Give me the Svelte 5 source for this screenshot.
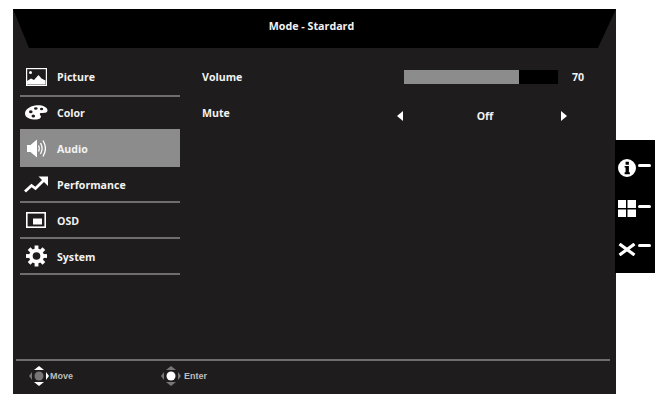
<script>
  const menu = [
    { name: 'Picture', icon: 'picture', cls: 'first' },
    { name: 'Color', icon: 'color', cls: 'plain' },
    { name: 'Audio', icon: 'audio', cls: 'active' },
    { name: 'Performance', icon: 'performance', cls: '' },
    { name: 'OSD', icon: 'osd', cls: '' },
    { name: 'System', icon: 'system', cls: '' }
  ];
  const volume = 74.7;
  const teeth = [0, 45, 90, 135];
</script>

{#snippet dpad(lit)}
  <svg class="dpad" width="20" height="20" viewBox="0 0 20 20">
    <path d="M10 0l5 4H5z" fill={lit === 'move' ? '#fff' : '#777'} />
    <path d="M5 16h10l-5 4z" fill={lit === 'move' ? '#fff' : '#777'} />
    <path d="M0 10l3-4v8z" fill="#777" />
    <path d="M20 10l-3-4v8z" fill={lit === 'move' ? '#fff' : '#777'} />
    <circle cx="10" cy="10" r="4.500" fill={lit === 'move' ? '#777' : '#fff'} />
  </svg>
{/snippet}

<div class="page">
  <div class="osd">
    <div class="header"><span>Mode - Stardard</span></div>

    <div class="main">
      <nav class="menu">
        {#each menu as item}
          <div class="item {item.cls}">
            <span class="icon">
              {#if item.icon === 'picture'}
                <svg width="21" height="18" viewBox="0 0 21 18">
                  <rect x="0.600" y="0.600" width="19.800" height="16.800" fill="#1e1c1c" stroke="#fff" stroke-width="1.200" />
                  <circle cx="4.500" cy="4.500" r="1.500" fill="#fff" />
                  <path d="M1 16.500v-3.500l4-2.500 3 1.500 4.500-5 3 3.500 4 2v4z" fill="#fff" />
                </svg>
              {:else if item.icon === 'color'}
                <svg width="23" height="15" viewBox="0 0 23 15">
                  <path fill="#fff" fill-rule="evenodd" d="M10 .500c6-1 12.500 1 12.500 5 0 2.500-4 2.500-6 2.500-2 0-2 1.500-1 2.500 1.500 2-1 4-4.500 4-6 0-11-2-11-6 0-4 4.500-7 10-8zM4 6.800a1.800 1.500 0 1 0 3.600 0a1.800 1.500 0 1 0-3.600 0zM9 3.500a1.800 1.300 0 1 0 3.600 0a1.800 1.300 0 1 0-3.600 0zM15 4a1.600 1.300 0 1 0 3.200 0a1.600 1.300 0 1 0-3.200 0zM6.500 11a1.800 1.500 0 1 0 3.600 0a1.800 1.500 0 1 0-3.600 0z" />
                </svg>
              {:else if item.icon === 'audio'}
                <svg width="19" height="21" viewBox="0 0 19 21">
                  <path d="M0 7h3.500L10 1.500v18L3.500 14H0z" fill="#fff" />
                  <path d="M11.500 7.500c1 2 1 4 0 6M13.500 5c2 3.500 2 7.500 0 11M16 2.500c3 5 3 11 0 16" fill="none" stroke="#fff" stroke-width="1.300" />
                </svg>
              {:else if item.icon === 'performance'}
                <svg width="24" height="17" viewBox="0 0 24 17">
                  <path d="M1 15.500l6.500-6 4 3 8-8" fill="none" stroke="#fff" stroke-width="2.800" />
                  <path d="M14.500 .500H24V10z" fill="#fff" />
                </svg>
              {:else if item.icon === 'osd'}
                <svg width="20" height="16" viewBox="0 0 20 16">
                  <rect x="0.800" y="0.800" width="18.400" height="14.400" fill="none" stroke="#fff" stroke-width="1.600" />
                  <rect x="7" y="6.500" width="9" height="6" fill="#fff" />
                </svg>
              {:else}
                <svg width="21" height="22" viewBox="-11 -11 22 22">
                  <circle r="5.800" fill="none" stroke="#fff" stroke-width="4" />
                  {#each teeth as deg}
                    <rect x="-2" y="-11" width="4" height="22" fill="#fff" transform="rotate({deg})" />
                  {/each}
                  <circle r="4" fill="#1e1c1c" />
                </svg>
              {/if}
            </span>
            <span class="name">{item.name}</span>
          </div>
        {/each}
      </nav>

      <section class="settings">
        <div class="setting">
          <span class="label">Volume</span>
          <div class="bar"><div class="fill" style="width: {volume}%"></div></div>
          <span class="value">70</span>
        </div>
        <div class="setting">
          <span class="label">Mute</span>
          <div class="choice">
            <i class="arrow left"></i>
            <span class="off">Off</span>
            <i class="arrow right"></i>
          </div>
        </div>
      </section>
    </div>

    <footer>
      <div class="hint move">{@render dpad('move')}<span>Move</span></div>
      <div class="hint">{@render dpad('enter')}<span>Enter</span></div>
    </footer>
  </div>

  <aside class="keys">
    <div class="key">
      <svg width="18" height="18" viewBox="0 0 19 19">
        <path fill="#fff" fill-rule="evenodd" d="M9.500 0a9.500 9.500 0 1 1 0 19a9.500 9.500 0 1 1 0-19zM8 3v3h3.500V3zM7 7.500V9h1v5H7v2h5.500v-2h-1V7.500z" />
      </svg>
      <b></b>
    </div>
    <div class="key">
      <svg width="18" height="17" viewBox="0 0 18 17">
        <path fill="#fff" d="M0 0h8v8H0zM9.500 0H18v8H9.500zM0 9.500h8V17H0zM9.500 9.500H18V17H9.500z" />
      </svg>
      <b></b>
    </div>
    <div class="key">
      <svg width="18" height="13" viewBox="0 0 18 13">
        <path d="M1.500 1l15 11M16.500 1l-15 11" stroke="#fff" stroke-width="3.200" />
      </svg>
      <b class="high"></b>
    </div>
  </aside>
</div>

<style>
  :global(body) {
    background: #fff;
  }

  .page {
    display: flex;
    align-items: flex-start;
    padding: 9px 0 0 13px;
    font-family: "Open Sans", "Noto Sans", sans-serif;
    font-size: 10.6px;
    font-weight: 700;
    color: #f2f2f2;
  }

  .osd {
    width: 603px;
    height: 385px;
    background: #1e1c1c;
    display: flex;
    flex-direction: column;
  }

  .header {
    height: 39px;
    background: #000;
    clip-path: polygon(0 0, 100% 0, 97% 100%, 16px 100%);
    display: flex;
    align-items: center;
    justify-content: center;
    flex: none;
    padding: 0 6px 6px 0;
    box-sizing: border-box;
    font-size: 10.7px;
  }

  .main {
    flex: 1;
    display: flex;
    padding: 11px 0 0 7px;
  }

  .menu {
    width: 160px;
    flex: none;
  }

  .item {
    height: 36px;
    box-sizing: border-box;
    border-bottom: 2px solid #6e6e6e;
    display: flex;
    align-items: center;
    padding-left: 3px;
  }

  .name {
    padding-top: 2px;
  }

  .item.first {
    height: 38px;
    padding-bottom: 1px;
  }

  .item.first .name {
    padding-top: 0;
  }

  .item.plain {
    height: 32px;
    border-bottom: none;
    padding-bottom: 2px;
  }

  .item.active {
    height: 38px;
    background: #8c8c8c;
    border-bottom: none;
  }

  .icon {
    width: 26px;
    flex: none;
    display: flex;
    justify-content: center;
    align-items: center;
    margin-right: 8px;
  }

  .settings {
    flex: 1;
    padding-left: 22px;
  }

  .setting {
    height: 36px;
    display: flex;
    align-items: center;
  }

  .label {
    width: 202px;
    flex: none;
  }

  .bar {
    width: 154px;
    height: 14px;
    background: #000;
    flex: none;
  }

  .fill {
    height: 100%;
    background: #8c8c8c;
  }

  .value {
    margin-left: 14px;
  }

  .choice {
    width: 170px;
    margin-left: -7px;
    padding-top: 5px;
    display: flex;
    align-items: center;
    justify-content: space-between;
  }

  .off {
    margin-left: 6px;
  }

  .arrow {
    width: 0;
    height: 0;
    border-top: 5px solid transparent;
    border-bottom: 5px solid transparent;
    display: block;
  }

  .arrow.left {
    border-right: 6px solid #fff;
  }

  .arrow.right {
    border-left: 6px solid #fff;
  }

  footer {
    height: 35px;
    margin: 0 6px 0 3px;
    border-top: 2px solid #6e6e6e;
    display: flex;
    align-items: center;
    padding: 0 0 4px 13px;
    box-sizing: border-box;
    font-family: "Liberation Sans", sans-serif;
    font-size: 9px;
    color: #bdbdbd;
    flex: none;
  }

  .hint {
    display: flex;
    align-items: center;
    gap: 3px;
  }

  .hint.move {
    width: 132px;
    gap: 1px;
  }

  .dpad {
    flex: none;
  }

  .keys {
    width: 40px;
    height: 133px;
    margin-top: 131px;
    margin-left: -1px;
    background: #000;
    position: relative;
    display: flex;
    flex-direction: column;
    padding: 18px 0 0 3px;
    box-sizing: border-box;
    gap: 22px;
  }

  .key {
    height: 19px;
    display: flex;
    align-items: center;
    gap: 2px;
  }

  .key b {
    width: 13px;
    height: 3px;
    background: #fff;
    border-radius: 2px;
    margin-bottom: 5px;
  }

  .key b.high {
    margin-bottom: 9px;
  }
</style>
